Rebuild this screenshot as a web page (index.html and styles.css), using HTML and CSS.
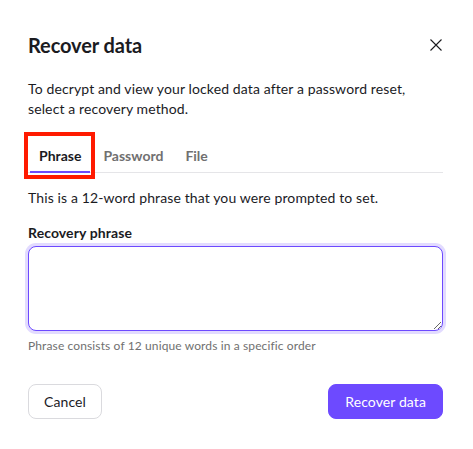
FILE: index.html
```html
<!DOCTYPE html>
<html lang="en">
<head>
<meta charset="utf-8">
<link rel="stylesheet" href="styles.css">
</head>
<body>
<div class="modal">
  <header class="modal-header">
    <h1 class="title">Recover data</h1>
    <button class="close" aria-label="Close">
      <svg width="12" height="12" viewBox="0 0 12 12"><path d="M0.5 0.5 L11.5 11.5 M11.5 0.5 L0.5 11.5" stroke="#1b1b1f" stroke-width="1.1" fill="none"/></svg>
    </button>
  </header>
  <p class="intro">To decrypt and view your locked data after a password reset, select a recovery method.</p>
  <nav class="tabs">
    <span class="tab active">Phrase</span>
    <span class="tab">Password</span>
    <span class="tab">File</span>
    <span class="highlight"></span>
  </nav>
  <p class="info">This is a 12-word phrase that you were prompted to set.</p>
  <label class="label" for="phrase">Recovery phrase</label>
  <textarea id="phrase" class="field"></textarea>
  <p class="hint">Phrase consists of 12 unique words in a specific order</p>
  <footer class="actions">
    <button class="btn">Cancel</button>
    <button class="btn primary">Recover data</button>
  </footer>
</div>
</body>
</html>
```
FILE: styles.css
```css
* { box-sizing: border-box; }
html, body { margin: 0; padding: 0; background: #fff; }
body { font-family: Lato, "Noto Sans", sans-serif; color: #1b1b1f; }
.modal { position: relative; padding: 30px 30px 0 28px; width: 473px; }
.modal-header { display: flex; justify-content: space-between; align-items: center; height: 30px; }
.title { margin: 0; font-size: 20px; font-weight: 700; letter-spacing: -0.1px; }
.close { border: 0; background: none; padding: 0; margin-right: 1px; width: 12px; height: 12px; display: flex; align-items: center; justify-content: center; }
.intro { margin: 19px 0 0; max-width: 395px; font-size: 14px; line-height: 20px; letter-spacing: 0.12px; }
.tabs { position: relative; display: flex; gap: 22px; margin-top: 20px; padding: 0 0 0 11px; border-bottom: 1px solid #e5e5e8; height: 34px; align-items: center; }
.tab { font-size: 14px; font-weight: 700; color: #707070; }
.tab.active { color: #1b1b1f; }
.tab.active::after { content: ""; position: absolute; left: 2px; width: 60px; bottom: -1px; height: 2px; background: #6d4aff; }
.highlight { position: absolute; left: -4px; top: -7px; width: 71px; height: 47px; border: 4px solid #ff1a00; }
.info { margin: 15px 0 0; font-size: 14px; line-height: 20px; letter-spacing: 0.12px; }
.label { display: block; margin-top: 15px; font-size: 14px; font-weight: 700; line-height: 20px; letter-spacing: 0.1px; }
.field { display: block; width: 100%; height: 85px; margin-top: 3px; border: 1px solid #6d4aff; border-radius: 8px; box-shadow: 0 0 0 3px #e2dbff; resize: vertical; font: inherit; outline: none; }
.hint { margin: 7px 0 0; font-size: 12px; color: #707070; line-height: 16px; letter-spacing: 0.12px; }
.actions { display: flex; justify-content: space-between; margin-top: 30px; }
.btn { font-family: inherit; font-size: 14px; height: 35px; padding: 0 15px; border-radius: 8px; border: 1px solid #dadade; background: #fff; color: #1b1b1f; letter-spacing: 0.1px; }
.btn.primary { background: #6d4aff; border-color: #6d4aff; color: #fff; padding: 0 16px; }
```
